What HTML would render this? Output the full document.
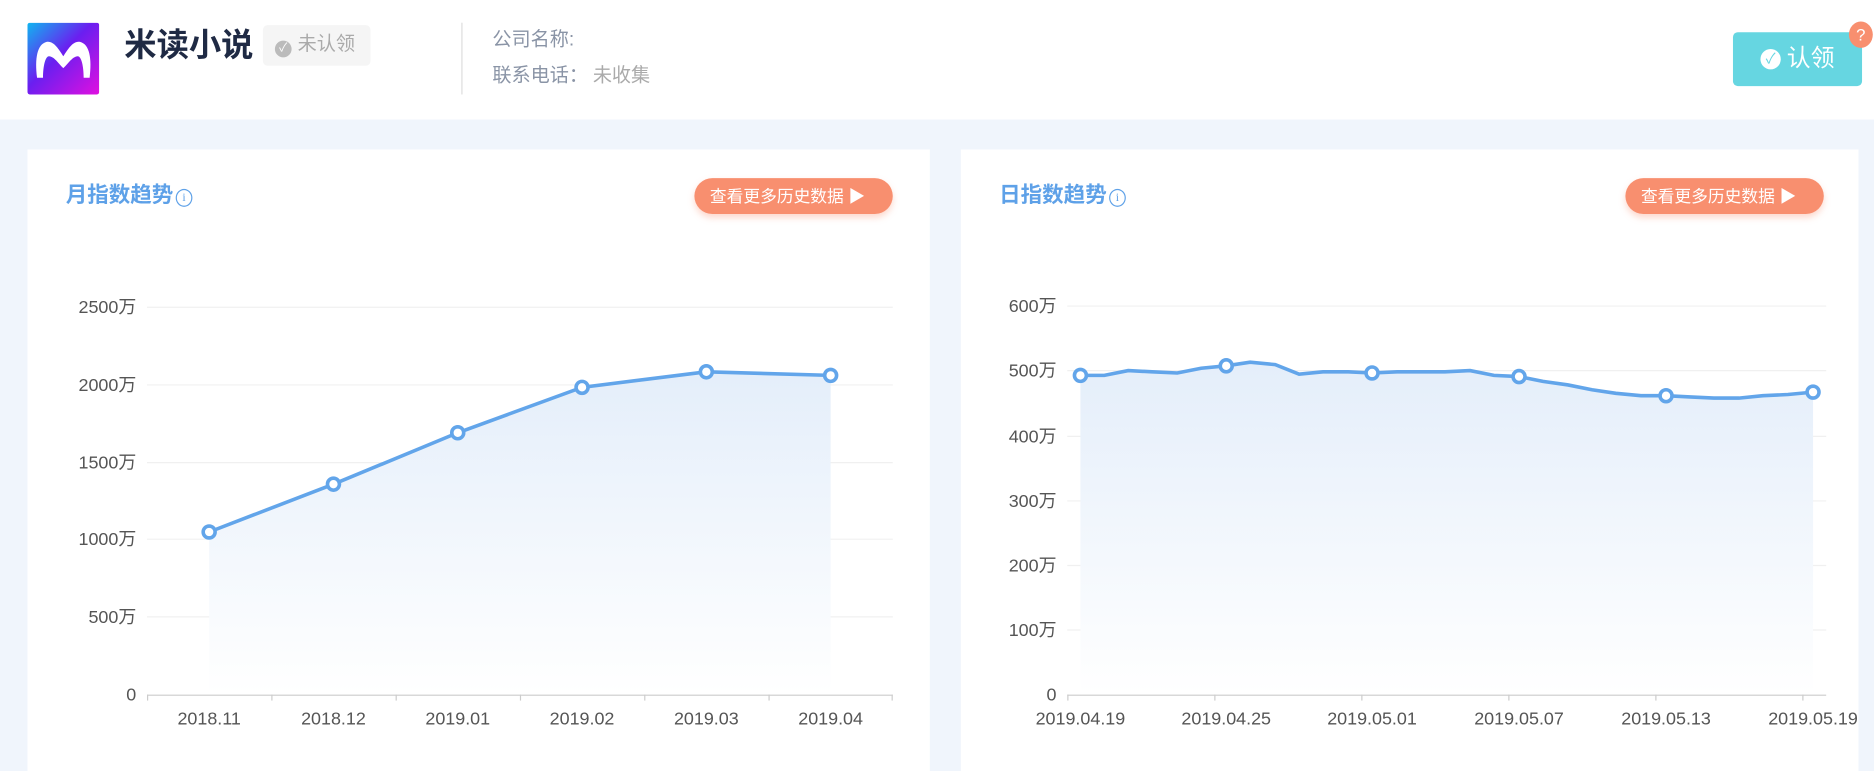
<!DOCTYPE html>
<html><head><meta charset="utf-8"><style>
html,body{margin:0;padding:0;width:1874px;height:746px;overflow:hidden;background:#f0f5fc;font-family:"Liberation Sans","Noto Sans CJK SC",sans-serif}
#w{position:absolute;left:0;top:0;width:1568px;height:624px;transform:scale(1.19515,1.1955);transform-origin:0 0}
.a{position:absolute}
.hdr{left:0;top:0;width:1568px;height:100px;background:#fff}
.card{background:#fff;top:125px;height:520px}
.ttl{font-size:18px;font-weight:bold;color:#5ea1e8;top:151px;line-height:24px}
.ob{background:#f88f6f;color:#fff;font-size:14px;height:30px;line-height:30px;border-radius:15px;box-shadow:0 3px 6px rgba(248,143,111,.35);padding:0 0 0 13px;width:153px;top:149px}
.info{display:inline-block;width:12px;height:13px;border:1.3px solid #5ea1e8;border-radius:50%;font-size:10px;line-height:13px;text-align:center;font-weight:normal;vertical-align:1px;margin-left:2px;font-family:"Liberation Serif",serif}
</style></head><body><div id="w">
<div class="a hdr"></div>
<svg class="a" style="left:23px;top:19px" width="60" height="60" viewBox="0 0 60 60"><defs><linearGradient id="lg" x1="0" y1="0" x2="1" y2="1"><stop offset="0" stop-color="#10b6f0"/><stop offset=".45" stop-color="#6a1ff0"/><stop offset="1" stop-color="#e010e0"/></linearGradient></defs><rect width="60" height="60" rx="2" fill="url(#lg)"/><path d="M8 46 C6 30 8 18 16 16 C22 15 26 22 30 28 C34 22 38 15 44 16 C52 18 54 30 52 46 L47 46 C47 36 45 28 42 28 C38 28 34 34 30 38 C26 34 22 28 18 28 C15 28 13 36 13 46 Z" fill="#fff"/></svg>
<div class="a" style="left:104px;top:21px;font-size:27px;font-weight:bold;color:#1f2a44;line-height:34px">米读小说</div>
<div class="a" style="left:220px;top:21px;width:90px;height:34px;background:#f5f5f5;border-radius:4px;color:#aaa;font-size:16px;line-height:34px"><span style="display:inline-block;width:14px;height:14px;background:#bbb;border-radius:50%;margin:0 5px 0 10px;vertical-align:-1px;color:#fff;font-size:10px;line-height:14px;text-align:center">✓</span>未认领</div>
<div class="a" style="left:386px;top:19px;width:1px;height:60px;background:#dcdcdc"></div>
<div class="a" style="left:412px;top:23px;font-size:16px;color:#8a94a6;line-height:22px">公司名称:</div>
<div class="a" style="left:412px;top:53px;font-size:16px;color:#8a94a6;line-height:22px">联系电话：<span style="color:#aaa;margin-left:4px">未收集</span></div>
<div class="a" style="left:1450px;top:27px;width:108px;height:45px;background:#66d6e1;border-radius:4px;color:#fff;font-size:20px;line-height:45px;text-align:center"><span style="display:inline-block;width:17px;height:17px;background:#fff;border-radius:50%;color:#66d6e1;font-size:12px;line-height:17px;vertical-align:2px;margin-right:5px">✓</span>认领</div>
<div class="a" style="left:1547px;top:18px;width:20px;height:22px;background:#f88f6f;border-radius:50%;color:#fff;font-size:14px;line-height:22px;text-align:center">?</div>

<div class="a card" style="left:23px;width:755px"></div>
<div class="a card" style="left:804px;width:751px"></div>
<div class="a ttl" style="left:55px">月指数趋势<span class="info">i</span></div>
<div class="a ttl" style="left:836px">日指数趋势<span class="info">i</span></div>
<div class="a ob" style="left:581px">查看更多历史数据 ▶</div>
<div class="a ob" style="left:1360px">查看更多历史数据 ▶</div>

<svg class="a" style="left:0;top:0" width="1568" height="624" viewBox="0 0 1568 624" font-family="Liberation Sans,Noto Sans CJK SC,sans-serif" font-size="15" fill="#555">
<defs><linearGradient id="af" x1="0" y1="0" x2="0" y2="1"><stop offset="0" stop-color="#e4eefa"/><stop offset="1" stop-color="#ffffff"/></linearGradient></defs>
<g stroke="#f0f0f0" stroke-width="1">
<line x1="123" y1="257" x2="747" y2="257"/><line x1="123" y1="322" x2="747" y2="322"/><line x1="123" y1="387" x2="747" y2="387"/><line x1="123" y1="451" x2="747" y2="451"/><line x1="123" y1="516" x2="747" y2="516"/>
<line x1="893" y1="256" x2="1528" y2="256"/><line x1="893" y1="310" x2="1528" y2="310"/><line x1="893" y1="365" x2="1528" y2="365"/><line x1="893" y1="419" x2="1528" y2="419"/><line x1="893" y1="473" x2="1528" y2="473"/><line x1="893" y1="527" x2="1528" y2="527"/>
</g>
<g text-anchor="end">
<text x="114" y="262">2500万</text><text x="114" y="327">2000万</text><text x="114" y="392">1500万</text><text x="114" y="456">1000万</text><text x="114" y="521">500万</text><text x="114" y="586">0</text>
<text x="884" y="261">600万</text><text x="884" y="315">500万</text><text x="884" y="370">400万</text><text x="884" y="424">300万</text><text x="884" y="478">200万</text><text x="884" y="532">100万</text><text x="884" y="586">0</text>
</g>
<path d="M175 445 L279 405 L383 362 L487 324 L591 311 L695 314 L695 581 L175 581 Z" fill="url(#af)"/>
<path d="M904 314 L924 314 L944 310 L964 311 L985 312 L1005 308 L1026 306 L1046 303 L1067 305 L1087 313 L1107 311 L1128 311 L1148 312 L1169 311 L1189 311 L1209 311 L1230 310 L1250 314 L1271 315 L1291 319 L1312 322 L1332 326 L1352 329 L1373 331 L1394 331 L1414 332 L1434 333 L1455 333 L1475 331 L1496 330 L1517 328 L1517 581 L904 581 Z" fill="url(#af)"/>
<g stroke="#ccc" stroke-width="1">
<line x1="123" y1="581.5" x2="747" y2="581.5"/>
<line x1="123.5" y1="581" x2="123.5" y2="586"/><line x1="227.5" y1="581" x2="227.5" y2="586"/><line x1="331.5" y1="581" x2="331.5" y2="586"/><line x1="435.5" y1="581" x2="435.5" y2="586"/><line x1="539.5" y1="581" x2="539.5" y2="586"/><line x1="643.5" y1="581" x2="643.5" y2="586"/><line x1="746.5" y1="581" x2="746.5" y2="586"/>
<line x1="893" y1="581.5" x2="1528" y2="581.5"/>
<line x1="893.5" y1="581" x2="893.5" y2="586"/><line x1="1016.5" y1="581" x2="1016.5" y2="586"/><line x1="1139.5" y1="581" x2="1139.5" y2="586"/><line x1="1262.5" y1="581" x2="1262.5" y2="586"/><line x1="1385.5" y1="581" x2="1385.5" y2="586"/><line x1="1508.5" y1="581" x2="1508.5" y2="586"/>
</g>
<g text-anchor="middle">
<text x="175" y="606">2018.11</text><text x="279" y="606">2018.12</text><text x="383" y="606">2019.01</text><text x="487" y="606">2019.02</text><text x="591" y="606">2019.03</text><text x="695" y="606">2019.04</text>
<text x="904" y="606">2019.04.19</text><text x="1026" y="606">2019.04.25</text><text x="1148" y="606">2019.05.01</text><text x="1271" y="606">2019.05.07</text><text x="1394" y="606">2019.05.13</text><text x="1517" y="606">2019.05.19</text>
</g>
<polyline points="175,445 279,405 383,362 487,324 591,311 695,314" fill="none" stroke="#62a5ea" stroke-width="3"/>
<polyline points="904,314 924,314 944,310 964,311 985,312 1005,308 1026,306 1046,303 1067,305 1087,313 1107,311 1128,311 1148,312 1169,311 1189,311 1209,311 1230,310 1250,314 1271,315 1291,319 1312,322 1332,326 1352,329 1373,331 1394,331 1414,332 1434,333 1455,333 1475,331 1496,330 1517,328" fill="none" stroke="#62a5ea" stroke-width="3"/>
<g fill="#fff" stroke="#62a5ea" stroke-width="3">
<circle cx="175" cy="445" r="5"/><circle cx="279" cy="405" r="5"/><circle cx="383" cy="362" r="5"/><circle cx="487" cy="324" r="5"/><circle cx="591" cy="311" r="5"/><circle cx="695" cy="314" r="5"/>
<circle cx="904" cy="314" r="5"/><circle cx="1026" cy="306" r="5"/><circle cx="1148" cy="312" r="5"/><circle cx="1271" cy="315" r="5"/><circle cx="1394" cy="331" r="5"/><circle cx="1517" cy="328" r="5"/>
</g>
</svg>
</div></body></html>
